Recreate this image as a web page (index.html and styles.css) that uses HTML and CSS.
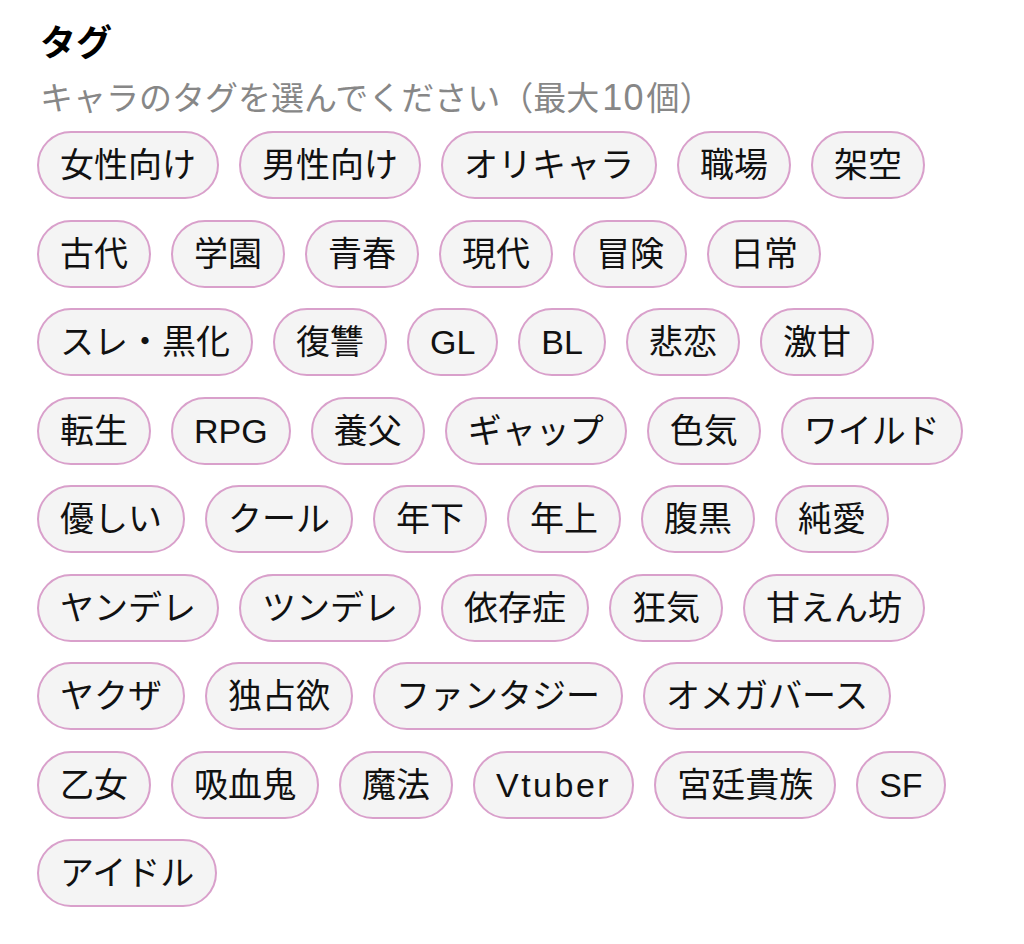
FILE: index.html
```html
<!DOCTYPE html>
<html lang="ja">
<head>
<meta charset="utf-8">
<link rel="stylesheet" href="styles.css">
</head>
<body>
<section class="tags">
  <h2 class="title">タグ</h2>
  <p class="hint">キャラのタグを選んでください（最大<span class="num">10</span>個）</p>
  <div class="chips">
    <span class="chip">女性向け</span>
    <span class="chip">男性向け</span>
    <span class="chip">オリキャラ</span>
    <span class="chip">職場</span>
    <span class="chip">架空</span>
    <span class="chip">古代</span>
    <span class="chip">学園</span>
    <span class="chip">青春</span>
    <span class="chip">現代</span>
    <span class="chip">冒険</span>
    <span class="chip">日常</span>
    <span class="chip">スレ・黒化</span>
    <span class="chip">復讐</span>
    <span class="chip">GL</span>
    <span class="chip">BL</span>
    <span class="chip">悲恋</span>
    <span class="chip">激甘</span>
    <span class="chip">転生</span>
    <span class="chip">RPG</span>
    <span class="chip">養父</span>
    <span class="chip">ギャップ</span>
    <span class="chip">色気</span>
    <span class="chip">ワイルド</span>
    <span class="chip">優しい</span>
    <span class="chip">クール</span>
    <span class="chip">年下</span>
    <span class="chip">年上</span>
    <span class="chip">腹黒</span>
    <span class="chip">純愛</span>
    <span class="chip">ヤンデレ</span>
    <span class="chip">ツンデレ</span>
    <span class="chip">依存症</span>
    <span class="chip">狂気</span>
    <span class="chip">甘えん坊</span>
    <span class="chip">ヤクザ</span>
    <span class="chip">独占欲</span>
    <span class="chip">ファンタジー</span>
    <span class="chip">オメガバース</span>
    <span class="chip">乙女</span>
    <span class="chip">吸血鬼</span>
    <span class="chip">魔法</span>
    <span class="chip chip--lower">Vtuber</span>
    <span class="chip">宮廷貴族</span>
    <span class="chip">SF</span>
    <span class="chip">アイドル</span>
  </div>
</section>
</body>
</html>
```

FILE: styles.css
```css
html, body {
  margin: 0;
  padding: 0;
  background: #ffffff;
}

body {
  font-family: "Liberation Sans", "Noto Sans CJK JP", sans-serif;
  color: #111111;
}

.tags {
  padding: 22px 34px 0 37px;
}

.title {
  margin: 0 0 0 3px;
  font-size: 36px;
  font-weight: 700;
  line-height: 43px;
  color: #000000;
}

.hint {
  margin: 14px 0 0 3px;
  font-size: 33px;
  line-height: 38px;
  color: #878787;
}

.hint .num {
  font-size: 36px;
  letter-spacing: 1px;
  padding: 0 2px 0 3px;
}

.chips {
  display: flex;
  flex-wrap: wrap;
  gap: 20.5px 20px;
  margin-top: 13px;
}

.chip {
  box-sizing: border-box;
  height: 68px;
  padding: 0 21px;
  border: 2px solid #d9a0cb;
  border-radius: 34px;
  background: #f4f4f4;
  font-size: 34px;
  line-height: 64px;
  color: #111111;
  white-space: nowrap;
}

.chip--lower {
  letter-spacing: 2.5px;
}
```
